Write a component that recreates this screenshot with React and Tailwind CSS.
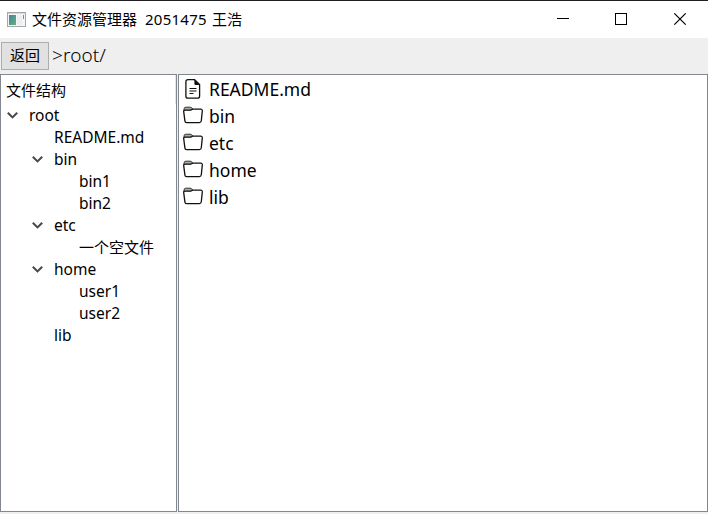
const latin = "font-['Noto_Sans','Noto_Sans_CJK_SC',sans-serif]";
const chinese = "font-['Noto_Sans_CJK_SC',sans-serif]";

const tree = [
  { name: 'root', pad: 'pl-[6px]', open: true },
  { name: 'README.md', pad: 'pl-[31px]' },
  { name: 'bin', pad: 'pl-[31px]', open: true },
  { name: 'bin1', pad: 'pl-[56px]' },
  { name: 'bin2', pad: 'pl-[56px]' },
  { name: 'etc', pad: 'pl-[31px]', open: true },
  { name: '一个空文件', pad: 'pl-[56px]', cjk: true },
  { name: 'home', pad: 'pl-[31px]', open: true },
  { name: 'user1', pad: 'pl-[56px]' },
  { name: 'user2', pad: 'pl-[56px]' },
  { name: 'lib', pad: 'pl-[31px]' },
];

const files = [
  { name: 'README.md', file: true },
  { name: 'bin' },
  { name: 'etc' },
  { name: 'home' },
  { name: 'lib' },
];

function AppIcon() {
  return (
    <svg width="19" height="15" viewBox="0 0 19 15" className="shrink-0">
      <defs>
        <linearGradient id="screen" x1="0" y1="0" x2="1" y2="1">
          <stop offset="0" stopColor="#4583a0" />
          <stop offset="1" stopColor="#62b27b" />
        </linearGradient>
      </defs>
      <rect x="0.5" y="0.5" width="18" height="14" fill="#f4f5f6" stroke="#a3a7ab" />
      <rect x="1" y="1" width="17" height="1" fill="#d5d8db" />
      <rect x="2" y="3" width="7" height="10" fill="url(#screen)" />
      <rect x="10" y="3" width="5" height="10" fill="#eceef0" />
      <rect x="16" y="3" width="1" height="4" fill="#5b9c8d" />
    </svg>
  );
}

function Chevron() {
  return (
    <svg width="12" height="8" viewBox="0 0 12 8" className="shrink-0">
      <path d="M0.8 1.8 L5.5 6.4 L10.2 1.8" fill="none" stroke="#4a4a4a" strokeWidth="2.1" />
    </svg>
  );
}

function FileIcon() {
  return (
    <svg width="20" height="20" viewBox="0 0 20 20" className="shrink-0">
      <path d="M4.5 0.7 H11.6 L16.6 5.6 V17 Q16.6 19.2 14.6 19.2 H4.9 Q2.9 19.2 2.9 17.2 V2.7 Q2.9 0.7 4.9 0.7 Z" fill="#fff" stroke="#111" strokeWidth="1.3" />
      <path d="M11.4 0.7 L16.7 5.9 H12.6 Q11.4 5.9 11.4 4.7 Z" fill="#111" />
      <path d="M6.5 9.5 H13.5 M6.5 12 H13.5 M6.5 14.5 H10.5" stroke="#111" strokeWidth="1.1" />
    </svg>
  );
}

function FolderIcon() {
  return (
    <svg width="20" height="20" viewBox="0 0 20 20" className="shrink-0">
      <path d="M1.1 5 V2.8 Q1.1 1.2 2.8 1.2 H7 Q8.1 1.2 8.8 1.9 L10 3.4 L8 4.4 Z" fill="#aaa" stroke="#333" strokeWidth="1" />
      <path d="M2 15.6 L0.7 5.6 Q0.6 4.2 2 4.2 H7.8 L9.6 3.2 H17.6 Q19.4 3.2 19.3 4.9 L18.3 14.7 Q18.1 16.6 16.3 16.6 H3.6 Q2.1 16.6 2 15.3 Z" fill="#fff" stroke="#111" strokeWidth="1.3" />
    </svg>
  );
}

export default function App() {
  return (
    <div className={`flex h-[514px] w-[708px] flex-col overflow-hidden bg-[#efefef] text-black ${latin}`}>
      <header className="flex h-[38px] shrink-0 items-center border-t border-[#221f22] bg-white pl-[7px]">
        <AppIcon />
        <div className="ml-[6px] flex items-center pb-[2px] text-[15px] leading-5 whitespace-pre">
          <span className={`w-[113px] ${chinese}`}>文件资源管理器</span>
          <span className="w-[67px] text-[15px] tracking-[0.25px]">2051475</span>
          <span className={chinese}>王浩</span>
        </div>
        <div className="ml-auto flex items-center pr-[21px] pb-px">
          <svg width="130" height="12" viewBox="0 0 130 12">
            <path d="M0 5.5 H12" stroke="#000" />
            <rect x="58.5" y="0.5" width="11" height="11" fill="none" stroke="#000" />
            <path d="M117.3 0.3 L128.7 11.7 M128.7 0.3 L117.3 11.7" stroke="#000" strokeWidth="1.1" />
          </svg>
        </div>
      </header>

      <div className="flex h-9 shrink-0 items-center pl-px">
        <button className={`flex h-[28px] w-[48px] items-center justify-center border border-[#adadad] bg-[#e1e1e1] pb-[2px] text-[15px] leading-5 ${chinese}`}>
          返回
        </button>
        <span className="ml-[3px] pb-[2px] text-[19px] leading-6 font-light tracking-[0.1px]">&gt;root/</span>
      </div>

      <main className="flex h-[438px] shrink-0 gap-px">
        <aside className="w-[177px] border border-[#828790] bg-white">
          <div className={`flex h-[29px] items-center border-r border-[#e5e5e5] pt-px pl-[5px] text-[15px] ${chinese}`}>文件结构</div>
          <ul>
            {tree.map((item) => (
              <li key={item.name} className={`flex h-[22px] items-center text-[15.5px] leading-[22px] ${item.pad}`}>
                <span className="flex w-[22px] shrink-0 items-center">{item.open && <Chevron />}</span>
                <span className={item.cjk ? `text-[15px] ${chinese}` : ''}>{item.name}</span>
              </li>
            ))}
          </ul>
        </aside>
        <section className="flex-1 border border-[#828790] bg-white pl-1">
          <ul>
            {files.map((item) => (
              <li key={item.name} className="flex h-[27px] items-center gap-[6px] text-[17.5px] leading-[25px]">
                {item.file ? <FileIcon /> : <FolderIcon />}
                <span className="pt-[2px]">{item.name}</span>
              </li>
            ))}
          </ul>
        </section>
      </main>
    </div>
  );
}
